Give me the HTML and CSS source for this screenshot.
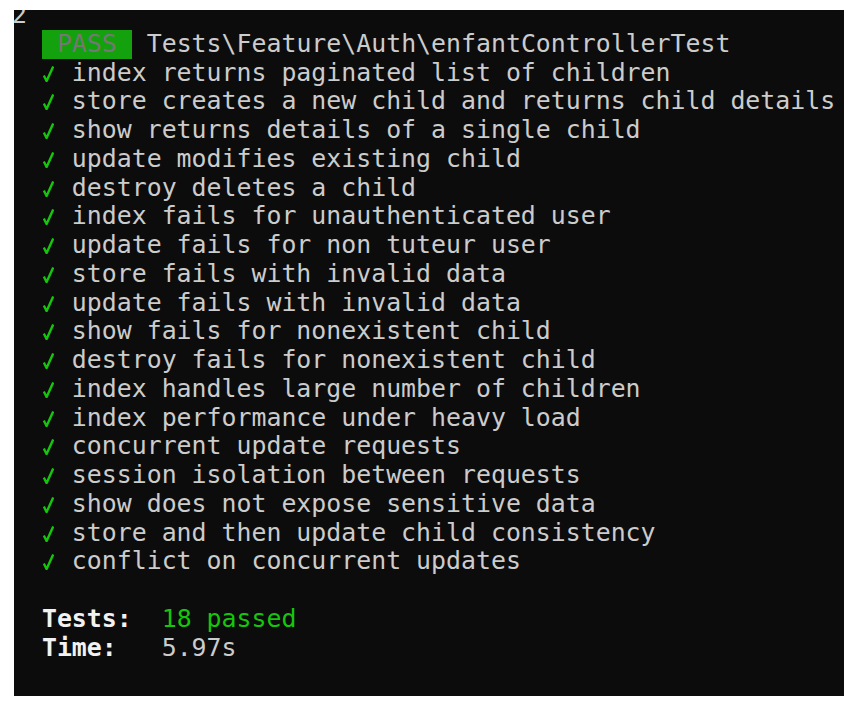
FILE: index.html
```html
<!DOCTYPE html>
<html>
<head>
<meta charset="utf-8">
<link rel="stylesheet" href="styles.css">
</head>
<body>
<div class="term">
<div class="out">
<div class="line">2</div>
<div class="line">  <span class="badge"> PASS </span> Tests\Feature\Auth\enfantControllerTest</div>
<div class="line">  <span class="ok"><svg viewBox="0 0 11 16" width="11" height="16"><polyline points="0.8,9.5 3.6,15 10.2,0.5" fill="none" stroke="#16c60c" stroke-width="2.4"/></svg></span> index returns paginated list of children</div>
<div class="line">  <span class="ok"><svg viewBox="0 0 11 16" width="11" height="16"><polyline points="0.8,9.5 3.6,15 10.2,0.5" fill="none" stroke="#16c60c" stroke-width="2.4"/></svg></span> store creates a new child and returns child details</div>
<div class="line">  <span class="ok"><svg viewBox="0 0 11 16" width="11" height="16"><polyline points="0.8,9.5 3.6,15 10.2,0.5" fill="none" stroke="#16c60c" stroke-width="2.4"/></svg></span> show returns details of a single child</div>
<div class="line">  <span class="ok"><svg viewBox="0 0 11 16" width="11" height="16"><polyline points="0.8,9.5 3.6,15 10.2,0.5" fill="none" stroke="#16c60c" stroke-width="2.4"/></svg></span> update modifies existing child</div>
<div class="line">  <span class="ok"><svg viewBox="0 0 11 16" width="11" height="16"><polyline points="0.8,9.5 3.6,15 10.2,0.5" fill="none" stroke="#16c60c" stroke-width="2.4"/></svg></span> destroy deletes a child</div>
<div class="line">  <span class="ok"><svg viewBox="0 0 11 16" width="11" height="16"><polyline points="0.8,9.5 3.6,15 10.2,0.5" fill="none" stroke="#16c60c" stroke-width="2.4"/></svg></span> index fails for unauthenticated user</div>
<div class="line">  <span class="ok"><svg viewBox="0 0 11 16" width="11" height="16"><polyline points="0.8,9.5 3.6,15 10.2,0.5" fill="none" stroke="#16c60c" stroke-width="2.4"/></svg></span> update fails for non tuteur user</div>
<div class="line">  <span class="ok"><svg viewBox="0 0 11 16" width="11" height="16"><polyline points="0.8,9.5 3.6,15 10.2,0.5" fill="none" stroke="#16c60c" stroke-width="2.4"/></svg></span> store fails with invalid data</div>
<div class="line">  <span class="ok"><svg viewBox="0 0 11 16" width="11" height="16"><polyline points="0.8,9.5 3.6,15 10.2,0.5" fill="none" stroke="#16c60c" stroke-width="2.4"/></svg></span> update fails with invalid data</div>
<div class="line">  <span class="ok"><svg viewBox="0 0 11 16" width="11" height="16"><polyline points="0.8,9.5 3.6,15 10.2,0.5" fill="none" stroke="#16c60c" stroke-width="2.4"/></svg></span> show fails for nonexistent child</div>
<div class="line">  <span class="ok"><svg viewBox="0 0 11 16" width="11" height="16"><polyline points="0.8,9.5 3.6,15 10.2,0.5" fill="none" stroke="#16c60c" stroke-width="2.4"/></svg></span> destroy fails for nonexistent child</div>
<div class="line">  <span class="ok"><svg viewBox="0 0 11 16" width="11" height="16"><polyline points="0.8,9.5 3.6,15 10.2,0.5" fill="none" stroke="#16c60c" stroke-width="2.4"/></svg></span> index handles large number of children</div>
<div class="line">  <span class="ok"><svg viewBox="0 0 11 16" width="11" height="16"><polyline points="0.8,9.5 3.6,15 10.2,0.5" fill="none" stroke="#16c60c" stroke-width="2.4"/></svg></span> index performance under heavy load</div>
<div class="line">  <span class="ok"><svg viewBox="0 0 11 16" width="11" height="16"><polyline points="0.8,9.5 3.6,15 10.2,0.5" fill="none" stroke="#16c60c" stroke-width="2.4"/></svg></span> concurrent update requests</div>
<div class="line">  <span class="ok"><svg viewBox="0 0 11 16" width="11" height="16"><polyline points="0.8,9.5 3.6,15 10.2,0.5" fill="none" stroke="#16c60c" stroke-width="2.4"/></svg></span> session isolation between requests</div>
<div class="line">  <span class="ok"><svg viewBox="0 0 11 16" width="11" height="16"><polyline points="0.8,9.5 3.6,15 10.2,0.5" fill="none" stroke="#16c60c" stroke-width="2.4"/></svg></span> show does not expose sensitive data</div>
<div class="line">  <span class="ok"><svg viewBox="0 0 11 16" width="11" height="16"><polyline points="0.8,9.5 3.6,15 10.2,0.5" fill="none" stroke="#16c60c" stroke-width="2.4"/></svg></span> store and then update child consistency</div>
<div class="line">  <span class="ok"><svg viewBox="0 0 11 16" width="11" height="16"><polyline points="0.8,9.5 3.6,15 10.2,0.5" fill="none" stroke="#16c60c" stroke-width="2.4"/></svg></span> conflict on concurrent updates</div>
<div class="line"> </div>
<div class="line">  <span class="label">Tests:</span>  <span class="pass">18 passed</span></div>
<div class="line">  <span class="label">Time:</span>   5.97s</div>
</div>
</div>
</body>
</html>
```
FILE: styles.css
```css
html, body {
  margin: 0;
  padding: 0;
  background: #ffffff;
}
body {
  padding: 10px 15px 13px 14px;
}
.term {
  background: #0c0c0c;
  height: 686px;
  width: 830px;
  overflow: hidden;
}
.out {
  margin: -9px 0 0 -2px;
  font-family: "DejaVu Sans Mono", monospace;
  font-size: 24.87px;
  line-height: 28.76px;
  color: #cccccc;
}
.line {
  height: 28.76px;
  white-space: pre;
}
.badge {
  background: #13a10e;
  color: #767676;
  display: inline-block;
  height: 28.76px;
  vertical-align: top;
}
.ok {
  display: inline-block;
  width: 1ch;
  height: 28.76px;
  vertical-align: top;
}
.ok svg {
  display: block;
  margin: 7px 0 0 1px;
}
.pass {
  color: #16c60c;
}
.label {
  color: #f2f2f2;
  font-weight: bold;
}
```
